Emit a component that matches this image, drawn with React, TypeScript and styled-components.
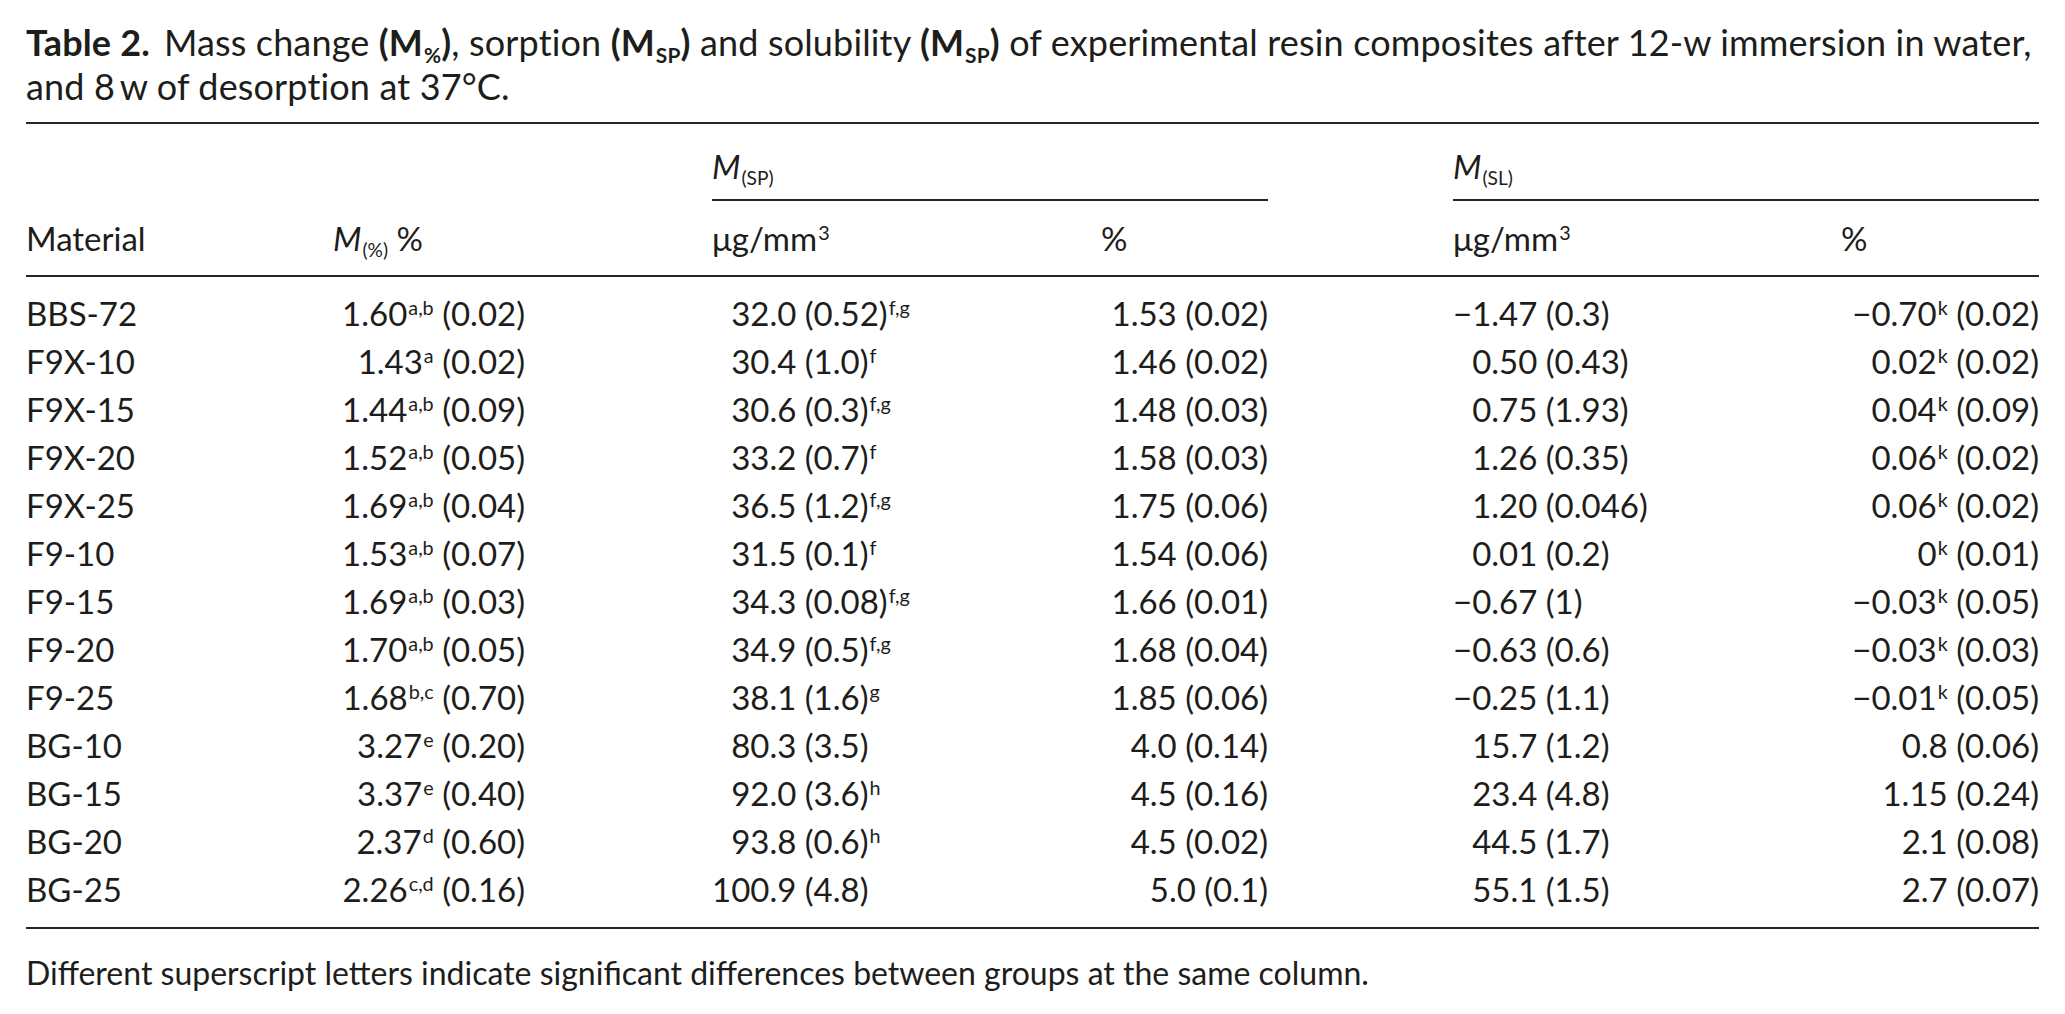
import React from 'react';
import styled, { createGlobalStyle } from 'styled-components';

const Global = createGlobalStyle`
  html, body { margin: 0; padding: 0; background: #ffffff; }
  body {
    font-family: Lato, "Open Sans", sans-serif;
    color: #1d1d1b;
    -webkit-font-smoothing: antialiased;
  }
`;

const COLS = '307px 192px 187px 389px 167px 185px 388px 198px';

const Page = styled.div`
  width: 2013px;
  padding: 20px 26px 0 26px;
`;

const Caption = styled.p`
  margin: 0;
  font-size: 36px;
  line-height: 44px;
  letter-spacing: 0.15px;
`;

const CaptionLabel = styled.b`
  font-weight: 700;
  margin-right: 14px;
`;

const Strong = styled.b`
  font-weight: 700;
`;

const Sub = styled.sub`
  font-size: 0.58em;
  vertical-align: -0.32em;
  line-height: 0;
  margin-left: 1px;
`;

const Sup = styled.sup`
  font-size: 0.6em;
  vertical-align: 0.55em;
  line-height: 0;
  margin-left: 1px;
`;

const Rule = styled.div<{ $gap?: number }>`
  height: 2px;
  background: #262626;
  margin-top: ${(p) => p.$gap ?? 0}px;
`;

const Row = styled.div<{ $h: number }>`
  display: grid;
  grid-template-columns: ${COLS};
  height: ${(p) => p.$h}px;
  align-items: center;
  font-size: 33px;
  line-height: 44px;
  font-variant-numeric: tabular-nums;
`;

const GroupCell = styled.div<{ $col: string }>`
  grid-column: ${(p) => p.$col};
  align-self: stretch;
  padding-top: 20px;
  border-bottom: 2px solid #262626;
`;

const Cell = styled.div<{ $col: number; $align?: 'left' | 'right'; $indent?: boolean }>`
  grid-column: ${(p) => p.$col};
  text-align: ${(p) => p.$align ?? 'left'};
  padding-left: ${(p) => (p.$indent ? '1ch' : '0')};
  white-space: nowrap;
`;

const Body = styled.div`
  padding: 12px 0 14px 0;
`;

const Italic = styled.i`
  font-style: italic;
`;

const Footnote = styled.p`
  margin: 24px 0 0 0;
  font-size: 32px;
  line-height: 40px;
`;

type Val = { v: string; sup?: string; sd?: string };

type RowData = {
  name: string;
  m: Val;
  sp: Val;
  spPct: string;
  sl: string;
  slPct: Val;
};

const rows: RowData[] = [
  { name: 'BBS-72', m: { v: '1.60', sup: 'a,b', sd: '(0.02)' }, sp: { v: '32.0 (0.52)', sup: 'f,g' }, spPct: '1.53 (0.02)', sl: '−1.47 (0.3)', slPct: { v: '−0.70', sup: 'k', sd: '(0.02)' } },
  { name: 'F9X-10', m: { v: '1.43', sup: 'a', sd: '(0.02)' }, sp: { v: '30.4 (1.0)', sup: 'f' }, spPct: '1.46 (0.02)', sl: '0.50 (0.43)', slPct: { v: '0.02', sup: 'k', sd: '(0.02)' } },
  { name: 'F9X-15', m: { v: '1.44', sup: 'a,b', sd: '(0.09)' }, sp: { v: '30.6 (0.3)', sup: 'f,g' }, spPct: '1.48 (0.03)', sl: '0.75 (1.93)', slPct: { v: '0.04', sup: 'k', sd: '(0.09)' } },
  { name: 'F9X-20', m: { v: '1.52', sup: 'a,b', sd: '(0.05)' }, sp: { v: '33.2 (0.7)', sup: 'f' }, spPct: '1.58 (0.03)', sl: '1.26 (0.35)', slPct: { v: '0.06', sup: 'k', sd: '(0.02)' } },
  { name: 'F9X-25', m: { v: '1.69', sup: 'a,b', sd: '(0.04)' }, sp: { v: '36.5 (1.2)', sup: 'f,g' }, spPct: '1.75 (0.06)', sl: '1.20 (0.046)', slPct: { v: '0.06', sup: 'k', sd: '(0.02)' } },
  { name: 'F9-10', m: { v: '1.53', sup: 'a,b', sd: '(0.07)' }, sp: { v: '31.5 (0.1)', sup: 'f' }, spPct: '1.54 (0.06)', sl: '0.01 (0.2)', slPct: { v: '0', sup: 'k', sd: '(0.01)' } },
  { name: 'F9-15', m: { v: '1.69', sup: 'a,b', sd: '(0.03)' }, sp: { v: '34.3 (0.08)', sup: 'f,g' }, spPct: '1.66 (0.01)', sl: '−0.67 (1)', slPct: { v: '−0.03', sup: 'k', sd: '(0.05)' } },
  { name: 'F9-20', m: { v: '1.70', sup: 'a,b', sd: '(0.05)' }, sp: { v: '34.9 (0.5)', sup: 'f,g' }, spPct: '1.68 (0.04)', sl: '−0.63 (0.6)', slPct: { v: '−0.03', sup: 'k', sd: '(0.03)' } },
  { name: 'F9-25', m: { v: '1.68', sup: 'b,c', sd: '(0.70)' }, sp: { v: '38.1 (1.6)', sup: 'g' }, spPct: '1.85 (0.06)', sl: '−0.25 (1.1)', slPct: { v: '−0.01', sup: 'k', sd: '(0.05)' } },
  { name: 'BG-10', m: { v: '3.27', sup: 'e', sd: '(0.20)' }, sp: { v: '80.3 (3.5)' }, spPct: '4.0 (0.14)', sl: '15.7 (1.2)', slPct: { v: '0.8', sd: '(0.06)' } },
  { name: 'BG-15', m: { v: '3.37', sup: 'e', sd: '(0.40)' }, sp: { v: '92.0 (3.6)', sup: 'h' }, spPct: '4.5 (0.16)', sl: '23.4 (4.8)', slPct: { v: '1.15', sd: '(0.24)' } },
  { name: 'BG-20', m: { v: '2.37', sup: 'd', sd: '(0.60)' }, sp: { v: '93.8 (0.6)', sup: 'h' }, spPct: '4.5 (0.02)', sl: '44.5 (1.7)', slPct: { v: '2.1', sd: '(0.08)' } },
  { name: 'BG-25', m: { v: '2.26', sup: 'c,d', sd: '(0.16)' }, sp: { v: '100.9 (4.8)' }, spPct: '5.0 (0.1)', sl: '55.1 (1.5)', slPct: { v: '2.7', sd: '(0.07)' } },
];

const Value: React.FC<{ d: Val }> = ({ d }) => (
  <>
    {d.v}
    {d.sup && <Sup>{d.sup}</Sup>}
    {d.sd && <> {d.sd}</>}
  </>
);

export default function App() {
  return (
    <Page>
      <Global />
      <Caption>
        <CaptionLabel>Table 2.</CaptionLabel>
        Mass change{' '}
        <Strong>
          (M<Sub>%</Sub>)
        </Strong>
        , sorption{' '}
        <Strong>
          (M<Sub>SP</Sub>)
        </Strong>{' '}
        and solubility{' '}
        <Strong>
          (M<Sub>SP</Sub>)
        </Strong>{' '}
        of experimental resin composites after 12-w immersion in water,
        <br />
        and 8{'\u2009'}w of desorption at 37°C.
      </Caption>

      <Rule $gap={14} />

      <Row $h={77}>
        <GroupCell $col="4 / 6">
          <Italic>M</Italic>
          <Sub>(SP)</Sub>
        </GroupCell>
        <GroupCell $col="7 / 9">
          <Italic>M</Italic>
          <Sub>(SL)</Sub>
        </GroupCell>
      </Row>

      <Row $h={74}>
        <Cell $col={1}>Material</Cell>
        <Cell $col={2}>
          <Italic>M</Italic>
          <Sub>(%)</Sub> %
        </Cell>
        <Cell $col={4}>
          μg/mm<Sup>3</Sup>
        </Cell>
        <Cell $col={5}>%</Cell>
        <Cell $col={7}>
          μg/mm<Sup>3</Sup>
        </Cell>
        <Cell $col={8}>%</Cell>
      </Row>

      <Rule />

      <Body>
        {rows.map((r) => (
          <Row $h={48} key={r.name}>
            <Cell $col={1}>{r.name}</Cell>
            <Cell $col={2} $align="right">
              <Value d={r.m} />
            </Cell>
            <Cell $col={4} $indent={!r.sp.v.startsWith('100')}>
              <Value d={r.sp} />
            </Cell>
            <Cell $col={5} $align="right">
              {r.spPct}
            </Cell>
            <Cell $col={7} $indent={!r.sl.startsWith('−')}>
              {r.sl}
            </Cell>
            <Cell $col={8} $align="right">
              <Value d={r.slPct} />
            </Cell>
          </Row>
        ))}
      </Body>

      <Rule />

      <Footnote>Different superscript letters indicate significant differences between groups at the same column.</Footnote>
    </Page>
  );
}
